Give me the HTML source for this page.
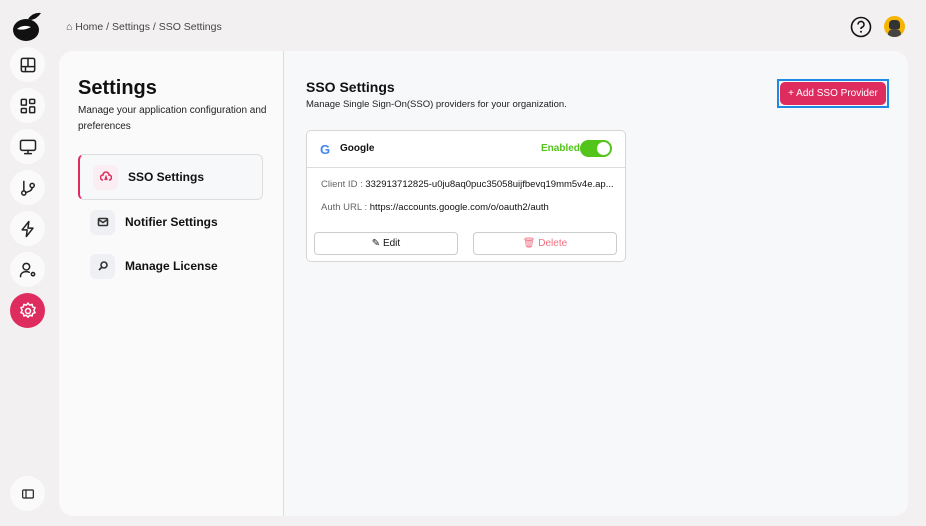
<!DOCTYPE html><html><head><style>
*{margin:0;padding:0;box-sizing:border-box}
body{width:926px;height:526px;background:#f2f0f1;font-family:"Liberation Sans",sans-serif;color:#111;position:relative;overflow:hidden}
.ic{position:absolute;left:10px;width:35px;height:35px;border-radius:50%;background:#fafafa;display:flex;align-items:center;justify-content:center}
.ic svg{width:20px;height:20px;fill:none;stroke:#222;stroke-width:1.8;stroke-linecap:round;stroke-linejoin:round}
.panel{position:absolute;left:59px;top:51px;width:849px;height:465px;border-radius:14px;background:#fafafa;overflow:hidden}
.right{position:absolute;left:224px;top:0;right:0;bottom:0;background:#f7f8fa;border-left:1px solid #ddd}
.abs{position:absolute}
.item{position:absolute;left:18px;width:185px;height:46px;display:flex;align-items:center;font-size:12px;font-weight:bold}
.ib{width:25px;height:25px;border-radius:6px;background:#eef0f3;margin-left:13px;margin-right:10px;display:flex;align-items:center;justify-content:center}
.ib svg{width:12px;height:12px;fill:none;stroke:#333;stroke-width:1.6}
.btn{position:absolute;top:101px;width:144px;height:23px;border:1px solid #ccc;border-radius:4px;background:#fff;font-size:10px;display:flex;align-items:center;justify-content:center;gap:4px}
</style></head><body>
<svg class="abs" style="left:11px;top:10px" width="32" height="32" viewBox="0 0 32 32"><ellipse cx="15" cy="20" rx="13" ry="11" fill="#111"/><path d="M17 9 Q22 2 30 3 Q26 9 20 10Z" fill="#111"/><path d="M6 19 Q12 14 20 17 Q13 21 6 19Z" fill="#fff"/></svg>
<div class="abs" style="left:66px;top:21px;font-size:10.5px;color:#444">⌂ Home / Settings / SSO Settings</div>
<div class="ic" style="top:47px"><svg viewBox="0 0 24 24"><rect x="4" y="4" width="16" height="16" rx="2"/><path d="M4 14h16M12 4v10M9 14v6"/></svg></div>
<div class="ic" style="top:88px"><svg viewBox="0 0 24 24"><rect x="4" y="4" width="6" height="7" rx="1"/><rect x="14" y="4" width="6" height="5" rx="1"/><rect x="4" y="15" width="6" height="5" rx="1"/><rect x="14" y="13" width="6" height="7" rx="1"/></svg></div>
<div class="ic" style="top:129px"><svg viewBox="0 0 24 24"><rect x="3" y="4" width="18" height="12" rx="2"/><path d="M12 16v4M8 20h8"/></svg></div>
<div class="ic" style="top:170px"><svg viewBox="0 0 24 24"><circle cx="7" cy="18" r="2.5"/><circle cx="17" cy="9" r="2.5"/><path d="M7 4v11.5M17 11.5c0 4-5 5-8 6"/></svg></div>
<div class="ic" style="top:211px"><svg viewBox="0 0 24 24"><path d="M13 3L5 13h6l-1 8 8-10h-6z"/></svg></div>
<div class="ic" style="top:252px"><svg viewBox="0 0 24 24"><circle cx="10" cy="8" r="4"/><path d="M3 20c0-4 3-6 7-6 1.5 0 2.5.3 3.5.8"/><circle cx="18" cy="17" r="2"/></svg></div>
<div class="ic" style="top:293px;background:#de2c5e"><svg viewBox="0 0 24 24" style="stroke:#fff"><circle cx="12" cy="12" r="3"/><path d="M12 2.5l2 2.5 3-1 .5 3 3 1-1.5 3 1.5 3-3 1-.5 3-3-1-2 2.5-2-2.5-3 1-.5-3-3-1 1.5-3-1.5-3 3-1 .5-3 3 1z"/></svg></div>
<div class="ic" style="top:476px"><svg viewBox="0 0 24 24" style="width:16px"><rect x="4" y="6" width="16" height="12" rx="1.5"/><path d="M9 6v12"/></svg></div>
<svg class="abs" style="left:850px;top:16px" width="22" height="22" viewBox="0 0 22 22"><circle cx="11" cy="11" r="9.5" fill="none" stroke="#111" stroke-width="1.6"/><path d="M8 8.5a3 3 0 1 1 4 2.8c-.8.3-1 .8-1 1.7" fill="none" stroke="#111" stroke-width="1.6"/><circle cx="11" cy="15.8" r="1" fill="#111"/></svg>
<div class="abs" style="left:884px;top:16px;width:21px;height:21px;border-radius:50%;background:#f5b500;overflow:hidden"><div class="abs" style="left:5px;top:4px;width:11px;height:9px;background:#333;border-radius:4px 4px 2px 2px"></div><div class="abs" style="left:4px;top:13px;width:13px;height:9px;background:#444;border-radius:5px 5px 0 0"></div></div>
<div class="panel">
<div class="abs" style="left:19px;top:26px;font-size:20px;font-weight:bold">Settings</div>
<div class="abs" style="left:19px;top:52px;width:195px;font-size:10px;line-height:16px;color:#222">Manage your application configuration and preferences</div>
<div class="item" style="top:103px;border:1px solid #ddd;border-left:2px solid #de2c5e;border-radius:6px;background:#f7f8fa;left:19px;width:185px"><div class="ib" style="background:#fbeef2"><svg viewBox="0 0 12 12" style="stroke:#de2c5e"><path d="M3 9a2.5 2.5 0 0 1 0-5 3 3 0 0 1 6 0 2.5 2.5 0 0 1 0 5"/><path d="M5 9l1-3 1 3"/></svg></div>SSO Settings</div>
<div class="item" style="top:148px"><div class="ib"><svg viewBox="0 0 12 12"><rect x="1.5" y="2.5" width="9" height="7" rx="1"/><path d="M1.5 3.5l4.5 3 4.5-3"/></svg></div>Notifier Settings</div>
<div class="item" style="top:192px"><div class="ib"><svg viewBox="0 0 12 12"><circle cx="7" cy="5" r="3"/><path d="M5 7l-3 3"/></svg></div>Manage License</div>
<div class="right">
<div class="abs" style="left:22px;top:28px;font-size:14px;font-weight:bold">SSO Settings</div>
<div class="abs" style="left:22px;top:48px;font-size:9.5px;color:#222">Manage Single Sign-On(SSO) providers for your organization.</div>
<div class="abs" style="left:493px;top:28px;width:112px;height:29px;border:2px solid #1e88e5;padding:1px"><div style="background:#de2c5e;color:#fff;height:100%;border-radius:5px;font-size:10px;line-height:23px;text-align:center">+ Add SSO Provider</div></div>
<div class="abs" style="left:22px;top:79px;width:320px;height:132px;border:1px solid #d6d6d6;border-radius:5px;background:#fff">
<div class="abs" style="left:0;right:0;top:0;height:37px;border-bottom:1px solid #ddd"></div>
<div class="abs" style="left:13px;top:11px;font-size:13px;font-weight:bold;color:#4285f4">G</div>
<div class="abs" style="left:33px;top:12px;font-size:10px;font-weight:bold">Google</div>
<div class="abs" style="left:234px;top:12px;font-size:10px;font-weight:bold;color:#52c41a">Enabled</div>
<div class="abs" style="left:273px;top:9px;width:32px;height:17px;border-radius:9px;background:#52c41a"><div class="abs" style="right:2px;top:2px;width:13px;height:13px;border-radius:50%;background:#fff"></div></div>
<div class="abs" style="left:14px;top:48px;font-size:9.5px;color:#666">Client ID : <span style="color:#111">332913712825-u0ju8aq0puc35058uijfbevq19mm5v4e.ap...</span></div>
<div class="abs" style="left:14px;top:71px;font-size:9.5px;color:#666">Auth URL : <span style="color:#111">https://accounts.google.com/o/oauth2/auth</span></div>
<div class="btn" style="left:7px">✎ Edit</div>
<div class="btn" style="left:166px;color:#f07080">🗑 Delete</div>
</div>
</div>
</div>
</body></html>
